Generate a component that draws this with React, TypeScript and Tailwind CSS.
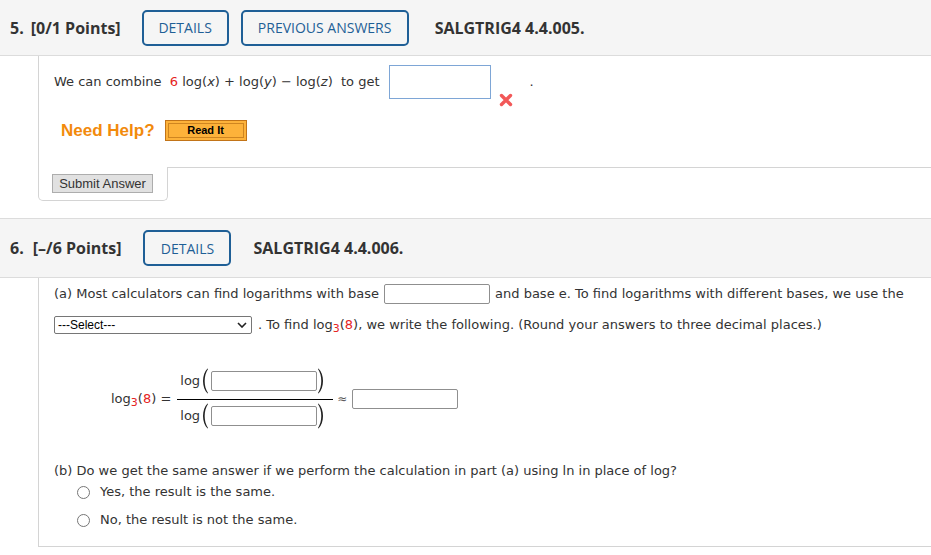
import React from 'react';

const BLUE = 'border-[#1f5f96] text-[#1f5f96]';

function HeaderButton({ label, width }: { label: string; width: string }) {
  return (
    <div
      className={`${width} h-[36px] border-2 ${BLUE} rounded-[5px] flex items-center justify-center text-[14px] font-['Open_Sans',sans-serif]`}
    >
      {label}
    </div>
  );
}

function Paren({ right = false }: { right?: boolean }) {
  return (
    <svg width="9" height="26" viewBox="0 0 9 26" className={right ? 'scale-x-[-1]' : ''}>
      <path d="M7.5 0.5 C1.5 6.5 1.5 19.5 7.5 25.5 L8 25 C3.6 18.5 3.6 7.5 8 1 Z" fill="#222" />
    </svg>
  );
}

function Box({ className = '' }: { className?: string }) {
  return <div className={`h-[20px] border border-[#8f8f8f] rounded-[2px] bg-white ${className}`} />;
}

function Radio({ label }: { label: string }) {
  return (
    <div className="flex items-center h-[20px] pl-[23px]">
      <div className="w-[13px] h-[13px] rounded-full border border-[#767676] bg-white" />
      <span className="ml-[10px]">{label}</span>
    </div>
  );
}

function RedX() {
  return (
    <svg width="14" height="14" viewBox="0 0 14 14">
      <path d="M2.5 2.5 L11.5 11.5 M11.5 2.5 L2.5 11.5" stroke="#f25858" strokeWidth="3.4" strokeLinecap="round" />
    </svg>
  );
}

export default function App() {
  return (
    <div className="w-[931px] h-[555px] bg-white overflow-hidden text-[#333]">
      {/* question 5 header */}
      <div className="h-[56px] bg-[#f5f5f5] border-b border-[#dcdcdc] flex items-center pl-[10px] font-['Open_Sans',sans-serif]">
        <span className="text-[16px] font-bold">5.</span>
        <span className="text-[16px] font-bold ml-[7px]">[0/1 Points]</span>
        <div className="ml-[21px]">
          <HeaderButton label="DETAILS" width="w-[87px]" />
        </div>
        <div className="ml-[12px]">
          <HeaderButton label="PREVIOUS ANSWERS" width="w-[168px]" />
        </div>
        <span className="text-[16px] font-bold ml-[26px]">SALGTRIG4 4.4.005.</span>
      </div>

      {/* question 5 body */}
      <div className="ml-[38px] font-['DejaVu_Sans',sans-serif] text-[13px]">
        <div className="h-[111px] border-l border-[#d4d4d4] pl-[15px] pt-[9px]">
          <div className="flex items-center h-[34px]">
            <span className="whitespace-pre">
              We can combine{'  '}
              <span className="text-[#e52222]">6</span> log(<i>x</i>) + log(<i>y</i>) − log(<i>z</i>){'  '}to get
            </span>
            <div className="ml-[9px] w-[102px] h-[34px] border border-[#7ea6d6] bg-white" />
            <div className="ml-[8px] self-end mb-[-8px]">
              <RedX />
            </div>
            <span className="ml-[17px]">.</span>
          </div>
          <div className="flex items-center mt-[21px] ml-[7px] h-[21px]">
            <span className="font-['Liberation_Sans',sans-serif] font-bold text-[17px] text-[#f28a0c]">Need Help?</span>
            <div className="ml-[10px] w-[82px] h-[21px] border border-[#c27418] bg-[#fdb23a] p-[2px]">
              <div className="w-full h-full border border-[#cf8520] flex items-center justify-center font-['Liberation_Sans',sans-serif] font-bold text-[11px] text-black">
                Read It
              </div>
            </div>
          </div>
        </div>
        <div className="flex">
          <div className="w-[130px] h-[34px] border-l border-r border-b border-[#d4d4d4] rounded-b-[5px] pl-[13px] pt-[7px]">
            <div className="w-[101px] h-[19px] border border-[#adadad] bg-[#e1e1e1] flex items-center justify-center font-['Liberation_Sans',sans-serif] text-[13px] text-[#333]">
              Submit Answer
            </div>
          </div>
          <div className="flex-1 border-t border-[#d4d4d4]" />
        </div>
      </div>

      {/* question 6 header */}
      <div className="mt-[17px] h-[60px] bg-[#f5f5f5] border-t border-b border-[#dcdcdc] flex items-center pl-[10px] font-['Open_Sans',sans-serif]">
        <span className="text-[16px] font-bold">6.</span>
        <span className="text-[16px] font-bold ml-[9px]">[–/6 Points]</span>
        <div className="ml-[22px]">
          <HeaderButton label="DETAILS" width="w-[88px]" />
        </div>
        <span className="text-[16px] font-bold ml-[22px]">SALGTRIG4 4.4.006.</span>
      </div>

      {/* question 6 body */}
      <div className="ml-[38px] h-[269px] border-l border-b border-[#d4d4d4] pl-[15px] pt-[6px] font-['DejaVu_Sans',sans-serif] text-[13px]">
        <div className="flex items-center h-[20px] whitespace-nowrap">
          <span>(a) Most calculators can find logarithms with base</span>
          <Box className="w-[106px] ml-[5px] mr-[5px]" />
          <span>and base e. To find logarithms with different bases, we use the</span>
        </div>
        <div className="flex items-center h-[19px] mt-[11px] whitespace-nowrap">
          <div className="w-[198px] h-[18px] border border-[#767676] rounded-[2px] flex items-center justify-between pl-[3px] pr-[4px] font-['Liberation_Sans',sans-serif] text-[12px] text-black bg-white">
            <span>---Select---</span>
            <svg width="10" height="6" viewBox="0 0 10 6">
              <path d="M1 1 L5 5 L9 1" stroke="#222" strokeWidth="1.6" fill="none" />
            </svg>
          </div>
          <span className="ml-[6px]">
            . To find log<sub className="text-[#e52222] text-[11px]">3</sub>(<span className="text-[#e52222]">8</span>), we write the
            following. (Round your answers to three decimal places.)
          </span>
        </div>

        <div className="flex items-center mt-[35px] pl-[57px]">
          <span className="whitespace-nowrap">
            log<sub className="text-[#e52222] text-[11px]">3</sub>(<span className="text-[#e52222]">8</span>) =
          </span>
          <div className="ml-[6px] flex flex-col w-[156px]">
            <div className="flex items-center h-[24px] pl-[3px]">
              <span>log</span>
              <Paren />
              <Box className="w-[106px] ml-[2px]" />
              <Paren right />
            </div>
            <div className="mt-[6px] h-px bg-black" />
            <div className="flex items-center h-[24px] mt-[4px] pl-[3px]">
              <span>log</span>
              <Paren />
              <Box className="w-[106px] ml-[2px]" />
              <Paren right />
            </div>
          </div>
          <span className="ml-[4px] text-[12px] text-[#555]">≈</span>
          <Box className="w-[106px] ml-[5px]" />
        </div>

        <div className="flex items-center h-[20px] mt-[33px]">
          (b) Do we get the same answer if we perform the calculation in part (a) using ln in place of log?
        </div>
        <div className="mt-[1px]">
          <Radio label="Yes, the result is the same." />
        </div>
        <div className="mt-[8px]">
          <Radio label="No, the result is not the same." />
        </div>
      </div>
    </div>
  );
}
